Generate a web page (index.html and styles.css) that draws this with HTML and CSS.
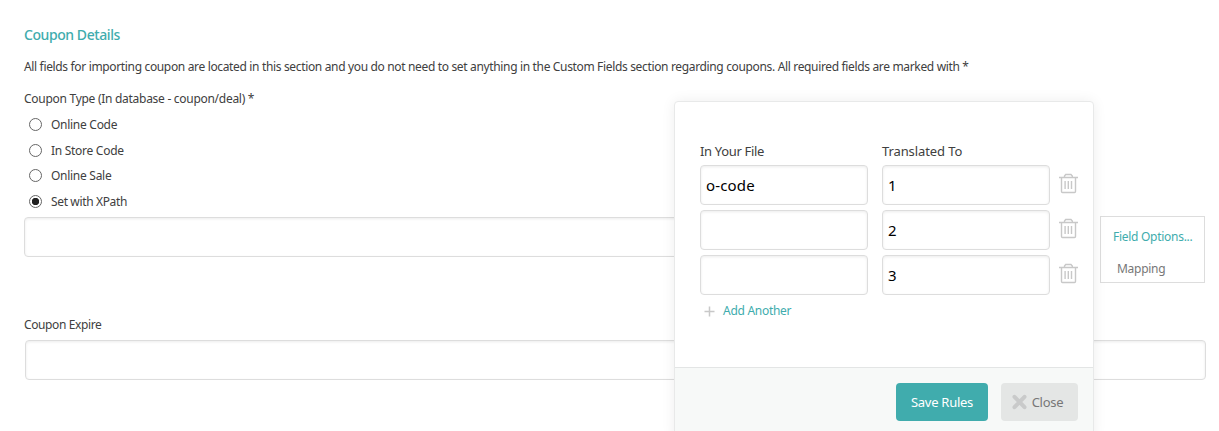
FILE: index.html
```html
<!DOCTYPE html>
<html lang="en">
<head>
<meta charset="utf-8">
<title>Coupon Details</title>
<link rel="stylesheet" href="styles.css">
</head>
<body>
<svg class="defs" width="0" height="0">
  <symbol id="trash" viewBox="0 0 19 21">
    <path d="M0 4.5h19M5.5 4.5V3l1.2-1.5h5.3L13.3 3v1.5M2.5 5v13.5c0 .7.4 1 1 1h12c.6 0 1-.3 1-1V5M6.1 8v8M9.3 8v8M12.5 8v8" fill="none" stroke="#c8c8c8" stroke-width="1.4"/>
  </symbol>
</svg>
<main class="section">
  <h2 class="title">Coupon Details</h2>
  <p class="intro">All fields for importing coupon are located in this section and you do not need to set anything in the Custom Fields section regarding coupons. All required fields are marked with *</p>
  <div class="label type-label">Coupon Type (In database - coupon/deal) *</div>
  <div class="radios">
    <label class="option"><i class="radio"></i><span>Online Code</span></label>
    <label class="option"><i class="radio"></i><span>In Store Code</span></label>
    <label class="option"><i class="radio"></i><span>Online Sale</span></label>
    <label class="option"><i class="radio checked"></i><span class="xpath">Set with XPath</span></label>
  </div>
  <div class="field-row">
    <div class="input grow"></div>
    <div class="field-options"><a class="options-link">Field Options...</a><span class="mapping">Mapping</span></div>
  </div>
  <div class="label expire-label">Coupon Expire</div>
  <div class="input expire"></div>
</main>
<div class="dialog">
  <div class="rules">
    <div class="rule head"><span class="h-file">In Your File</span><span class="h-to">Translated To</span></div>
    <div class="rule"><div class="input"><span class="code">o-code</span></div><div class="input">1</div><svg class="trash"><use href="#trash"/></svg></div>
    <div class="rule"><div class="input"></div><div class="input">2</div><svg class="trash"><use href="#trash"/></svg></div>
    <div class="rule"><div class="input"></div><div class="input">3</div><svg class="trash"><use href="#trash"/></svg></div>
    <a class="add"><svg class="plus" viewBox="0 0 11 11"><path d="M5.5.5v10M.5 5.5h10" stroke="#c8c8c8" stroke-width="1.5"/></svg><span>Add Another</span></a>
  </div>
  <div class="footer">
    <div class="btn save"><span>Save Rules</span></div>
    <div class="btn close"><svg class="x" viewBox="0 0 15 16"><path d="M2.5 2.8l10 10.4M12.5 2.8L2.5 13.2" stroke="#c9caca" stroke-width="4" stroke-linecap="round"/></svg><span>Close</span></div>
  </div>
</div>
</body>
</html>
```
FILE: styles.css
```css
* { box-sizing: border-box; }
body { margin: 0; width: 1219px; height: 431px; overflow: hidden; position: relative; background: #fff; color: #404040; font: 12px/20px "Noto Sans", "Open Sans", sans-serif; letter-spacing: -.28px; white-space: nowrap; }
.defs { display: block; height: 0; }
.section { padding: 25px 13px 0 24px; }
.title { margin: 0; color: #40acad; font-size: 14px; line-height: 20px; font-weight: 500; letter-spacing: -.43px; }
.intro { margin: 12px 0; letter-spacing: -.343px; }
.radios { margin-top: 4px; display: grid; grid-auto-rows: 25.7px; padding-left: 5px; }
.option { display: flex; align-items: center; gap: 9px; }
.option span { margin-top: -2px; }
.xpath { letter-spacing: -.36px; }
.radio { width: 13px; height: 13px; border: 1px solid #666; border-radius: 50%; margin-top: -3px; display: block; }
.radio.checked { background: radial-gradient(circle, #222 0 3.4px, #fff 4px); }
.input { height: 40px; border: 1px solid #ddd; border-radius: 4px; background: #fff; box-shadow: inset 0 1px 3px rgba(0,0,0,.08); }
.field-row { display: flex; gap: 10px; height: 99px; }
.grow { flex: 1; margin-top: 1px; }
.field-options { width: 105px; height: 67px; margin-right: 1px; border: 1px solid #ddd; background: #fff; display: flex; flex-direction: column; gap: 12px; padding: 10px 0 0 12px; }
.options-link { color: #40acad; }
.mapping { color: #777; padding-left: 4px; }
.expire-label { letter-spacing: -.39px; }
.expire { margin: 5px 0 0 1px; }
.dialog { position: absolute; left: 674px; top: 101px; width: 420px; height: 340px; background: #fff; border: 1px solid #e8e9e9; border-radius: 4px; box-shadow: 0 0 14px rgba(0,0,0,.07); display: flex; flex-direction: column; }
.rules { height: 265px; padding: 39px 15px 0 25px; }
.rule { display: grid; grid-template-columns: 168px 168px 20px; column-gap: 14px; height: 45px; font-size: 15px; line-height: 38px; color: #000; letter-spacing: .15px; }
.rule .input { padding-left: 5px; }
.head { height: 24px; font-size: 13px; line-height: 20px; color: #404040; letter-spacing: -.1px; }
.h-file { letter-spacing: -.33px; }
.trash { width: 19px; height: 21px; margin: 8px 0 0 -5px; }
.add { display: flex; align-items: center; height: 20px; padding-left: 4px; gap: 8px; color: #40acad; margin-top: 1px; }
.plus { width: 11px; height: 11px; }
.footer { flex: 1; background: #f7f9f8; border-top: 1px solid #e3e5e5; display: flex; justify-content: flex-end; gap: 13px; padding: 15px 15px 0 0; }
.btn { height: 38px; border-radius: 4px; display: flex; align-items: center; justify-content: center; font-size: 13px; }
.save { width: 92px; background: #40acad; color: #fff; }
.close { width: 77px; background: #e4e6e5; color: #777; gap: 5px; padding-right: 4px; }
.x { width: 15px; height: 16px; }
```
